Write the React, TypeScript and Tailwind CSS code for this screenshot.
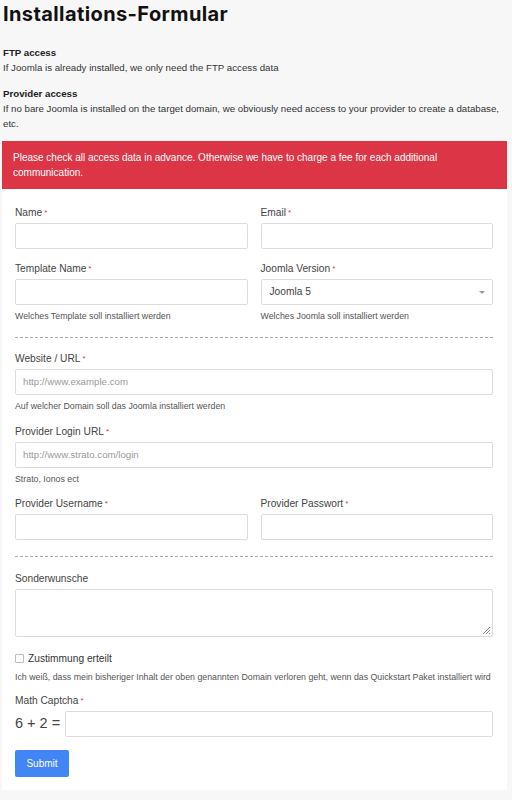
import React from "react";

function Req() {
  return <span className="text-[#dc3545] text-[8px] align-top ml-[2px]">*</span>;
}

function Label({ text, required = true }: { text: string; required?: boolean }) {
  return (
    <div className="h-[15px] leading-[15px] text-[10.2px] text-[#444] mb-[3px]">
      {text}
      {required && <Req />}
    </div>
  );
}

function Input({ placeholder }: { placeholder?: string }) {
  return (
    <div className="h-[26px] border border-[#dcdcdc] rounded-[2px] bg-white px-[7px] flex items-center text-[9.7px] text-[#999]">
      {placeholder}
    </div>
  );
}

function Help({ text }: { text: string }) {
  return <div className="mt-[5px] h-[12px] leading-[12px] text-[8.8px] text-[#555]">{text}</div>;
}

function Divider() {
  return <div className="border-t border-dashed border-[#aaa]" />;
}

export default function App(): React.JSX.Element {
  return (
    <div className="min-h-[800px] bg-[#f7f7f7] font-['Liberation_Sans',Arial,sans-serif] text-[#222]">
      {/* Heading */}
      <div className="px-[3px]">
        <h1 className="h-[28px] leading-[28px] text-[20px] font-bold text-[#111] font-['Inter',sans-serif] tracking-[0.4px]">
          Installations-Formular
        </h1>
        <div className="mt-[17px] text-[9.7px] leading-[15px] text-[#333]">
          <div className="font-bold text-[#222]">FTP access</div>
          <div>If Joomla is already installed, we only need the FTP access data</div>
          <div className="font-bold text-[#222] mt-[11px]">Provider access</div>
          <div>
            If no bare Joomla is installed on the target domain, we obviously need access to your provider to create a
            database, etc.
          </div>
        </div>
      </div>

      {/* Alert */}
      <div className="ml-[2px] w-[505px] mt-[10px] bg-[#dc3545] text-white text-[10px] leading-[15px] pl-[11px] pr-[16px] pt-[9px] pb-[9px]">
        Please check all access data in advance. Otherwise we have to charge a fee for each additional communication.
      </div>

      {/* Form card */}
      <div className="ml-[2px] w-[505px] bg-white pl-[13px] pr-[14px] pt-[16px] pb-[13px]">
        <div className="grid grid-cols-2 gap-x-[13px]">
          <div>
            <Label text="Name" />
            <Input />
          </div>
          <div>
            <Label text="Email" />
            <Input />
          </div>
        </div>

        <div className="grid grid-cols-2 gap-x-[13px] mt-[12px]">
          <div>
            <Label text="Template Name" />
            <Input />
            <Help text="Welches Template soll installiert werden" />
          </div>
          <div>
            <Label text="Joomla Version" />
            <div className="h-[26px] border border-[#dcdcdc] rounded-[2px] bg-white pl-[8px] pr-[7px] flex items-center justify-between text-[10.2px] text-[#444]">
              <span>Joomla 5</span>
              <span className="w-0 h-0 border-l-[3px] border-r-[3px] border-t-[3px] border-l-transparent border-r-transparent border-t-[#999]" />
            </div>
            <Help text="Welches Joomla soll installiert werden" />
          </div>
        </div>

        <div className="mt-[15px]">
          <Divider />
        </div>

        <div className="mt-[13px]">
          <Label text="Website / URL" />
          <Input placeholder="http://www.example.com" />
          <Help text="Auf welcher Domain soll das Joomla installiert werden" />
        </div>

        <div className="mt-[12px]">
          <Label text="Provider Login URL" />
          <Input placeholder="http://www.strato.com/login" />
          <Help text="Strato, Ionos ect" />
        </div>

        <div className="grid grid-cols-2 gap-x-[13px] mt-[11px]">
          <div>
            <Label text="Provider Username" />
            <Input />
          </div>
          <div>
            <Label text="Provider Passwort" />
            <Input />
          </div>
        </div>

        <div className="mt-[16px]">
          <Divider />
        </div>

        <div className="mt-[14px]">
          <Label text="Sonderwunsche" required={false} />
          <div className="relative h-[48px] border border-[#dcdcdc] rounded-[2px] bg-white">
            <svg className="absolute right-[1px] bottom-[1px]" width="9" height="9" viewBox="0 0 9 9">
              <path d="M8 1 L1 8 M8 4 L4 8 M8 7 L7 8" stroke="#888" strokeWidth="1" />
            </svg>
          </div>
        </div>

        <div className="mt-[14px] h-[15px] flex items-center gap-[4px] text-[10.2px] text-[#333]">
          <span className="w-[9px] h-[9px] border border-[#bbb] rounded-[1px] bg-white" />
          <span>Zustimmung erteilt</span>
        </div>
        <div className="mt-[5px] h-[12px] leading-[12px] text-[8.8px] text-[#555] whitespace-nowrap">
          Ich weiß, dass mein bisheriger Inhalt der oben genannten Domain verloren geht, wenn das Quickstart Paket
          installiert wird
        </div>

        <div className="mt-[10px]">
          <Label text="Math Captcha" />
          <div className="flex items-center gap-[5px]">
            <span className="text-[14.5px] text-[#444] whitespace-nowrap">6 + 2 =</span>
            <div className="flex-1 h-[26px] border border-[#dcdcdc] rounded-[2px] bg-white" />
          </div>
        </div>

        <button className="mt-[13px] h-[27px] w-[54px] rounded-[2px] bg-[#4285f4] text-white text-[10px]">
          Submit
        </button>
      </div>
    </div>
  );
}
